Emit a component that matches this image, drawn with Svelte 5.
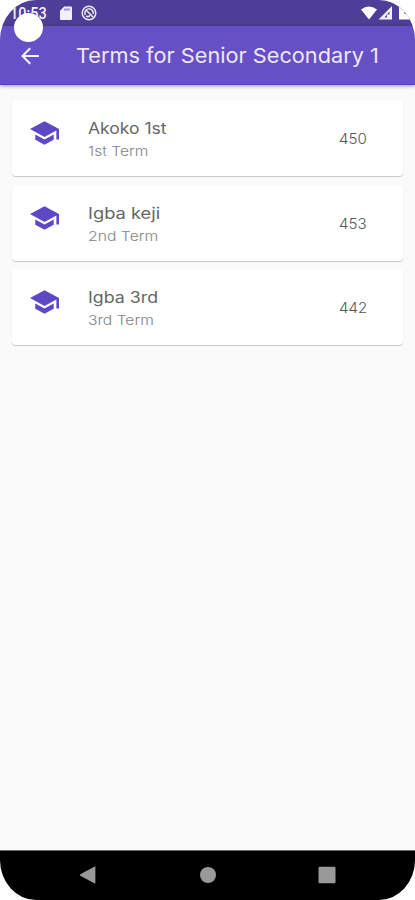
<script>
  const terms = [
    { name: 'Akoko 1st', term: '1st Term', value: 450, nameWidth: 79, termWidth: 60 },
    { name: 'Igba keji', term: '2nd Term', value: 453, nameWidth: 72, termWidth: 70 },
    { name: 'Igba 3rd', term: '3rd Term', value: 442, nameWidth: 70, termWidth: 66 },
  ];

  // Widens the letterforms so that a label fills its intended width.
  function widen(node, width) {
    const fit = () => {
      node.style.transform = `scaleX(${width / node.offsetWidth})`;
    };
    fit();
    document.fonts?.ready.then(fit);
  }
</script>

<div class="screen">
  <div class="status">
    <span class="clock"><span use:widen={37}>10:53</span></span>
    <svg class="sd" viewBox="0 0 12 14" width="12" height="14"><path fill="#f4effc" fill-rule="evenodd" d="M4.2.5H11q1 0 1 1V13q0 1-1 1H1q-1 0-1-1V4.8zM4.5 2.500v2h1v-2zm2 0v2h1v-2zm2 0v2h1v-2z" /></svg>
    <svg class="ring" viewBox="0 0 16 16" width="16" height="16" fill="none" stroke="#efe9fa"><circle cx="8" cy="8" r="6.800" stroke-width="1.500" /><path stroke-width="1.500" d="M4.300 10a4.200 4.200 0 1 1 7.800-1M5.500 5.500l6.500 6.500M5 11q2.500 1.500 4-.5" /></svg>
    <svg class="signals" viewBox="0 0 54 16" width="54" height="16">
      <path fill="#fff" d="M0 4.500Q8-1.500 16 4.500L8 14.500z" />
      <path fill="#f3eefb" fill-rule="evenodd" d="M31 1v13.500H17.500zM28.500 6.500 23.500 12.500h2.500V9.500h2.500z" />
      <path fill="#fff" d="M38 1h5.500v13.500H38zM42 9h7v5.500h-7z" />
    </svg>
  </div>
  <header>
    <svg class="back" viewBox="0 0 18 18" width="18" height="18" fill="none" stroke="#f5f1fd" stroke-width="2"><path d="M18 9H1.500M9.200 1.200 1.500 9l7.700 7.800" /></svg>
    <h1><span use:widen={303}>Terms for Senior Secondary 1</span></h1>
  </header>
  <main>
    {#each terms as t}
      <article>
        <svg class="cap" viewBox="1 3 22 18" width="29" height="24"><path fill="#6048c4" d="M5 13.180v4L12 21l7-3.820v-4L12 17l-7-3.820zM12 3 1 9l11 6 9-4.910V17h2V9L12 3z" /></svg>
        <div class="label">
          <div class="name"><span use:widen={t.nameWidth}>{t.name}</span></div>
          <div class="term"><span use:widen={t.termWidth}>{t.term}</span></div>
        </div>
        <div class="value"><span use:widen={28}>{t.value}</span></div>
      </article>
    {/each}
  </main>
  <nav>
    <svg viewBox="0 0 18 18" width="18" height="18"><path fill="#999" d="M15.200.8q1.200-.6 1.200.7v15q0 1.300-1.200.7L1.300 9.700q-1.100-.7 0-1.400z" /></svg>
    <svg viewBox="0 0 18 18" width="18" height="18"><circle cx="9" cy="9" r="8" fill="#999" /></svg>
    <svg viewBox="0 0 18 18" width="18" height="18"><rect x=".5" y=".7" width="17" height="16.600" rx="1.200" fill="#999" /></svg>
  </nav>
  <div class="camera"></div>
</div>

<style>
  :global(body) { background: #fff; }
  .screen {
    position: relative;
    display: flex;
    flex-direction: column;
    width: 415px;
    height: 900px;
    overflow: hidden;
    border-radius: 36px / 40px;
    background: #fafafa;
    font-family: Inter, "Open Sans", sans-serif;
  }
  span { display: inline-block; white-space: nowrap; transform-origin: left; }
  .status {
    display: flex;
    height: 26px;
    flex: none;
    background: #4f3e97;
  }
  .clock {
    width: 60px;
    box-sizing: border-box;
    padding-left: 10px;
    font: 500 16px/28px Roboto, sans-serif;
    color: #f2eefa;
  }
  .sd { margin-top: 6px; }
  .ring { margin: 5px 0 0 9px; }
  .signals { margin: 5px 0 0 auto; }
  header {
    position: relative;
    display: flex;
    align-items: center;
    flex: none;
    height: 59px;
    padding: 1px 0 0 21px;
    box-sizing: border-box;
    background: #6750c5;
    border-bottom: 1px solid #5741b8;
    box-shadow: 0 1px 4px rgba(0, 0, 0, .4);
  }
  h1 {
    margin: 0 0 0 37px;
    font-size: 20.500px;
    line-height: 28px;
    font-weight: 400;
    color: #eee8fb;
  }
  main {
    flex: 1;
    display: flex;
    flex-direction: column;
    gap: 8.500px;
    padding: 15px 12px 0;
  }
  article {
    display: flex;
    flex: none;
    height: 76px;
    box-sizing: border-box;
    padding: 0 36px 0 18px;
    background: #fff;
    border-radius: 4px;
    box-shadow: 0 1px 1px rgba(0, 0, 0, .2);
  }
  .cap { margin-top: 21px; }
  .label { margin: 18px 0 0 29px; }
  .name {
    height: 22px;
    font-size: 15.500px;
    line-height: 22px;
    color: #666;
  }
  .term {
    height: 22px;
    font-size: 13.500px;
    line-height: 22px;
    font-weight: 300;
    color: #858585;
  }
  .value {
    width: 28px;
    margin: 28px 0 0 auto;
    font-size: 14px;
    line-height: 22px;
    font-weight: 300;
    color: #555;
  }
  nav {
    display: flex;
    flex: none;
    height: 50px;
    box-sizing: border-box;
    align-items: center;
    justify-content: space-between;
    padding: 0 79px 1px;
    background: #000;
    border-top: 1px solid #666;
  }
  .camera {
    position: absolute;
    left: 14px;
    top: 13px;
    width: 29px;
    height: 29px;
    border-radius: 50%;
    background: #fff;
  }
</style>
